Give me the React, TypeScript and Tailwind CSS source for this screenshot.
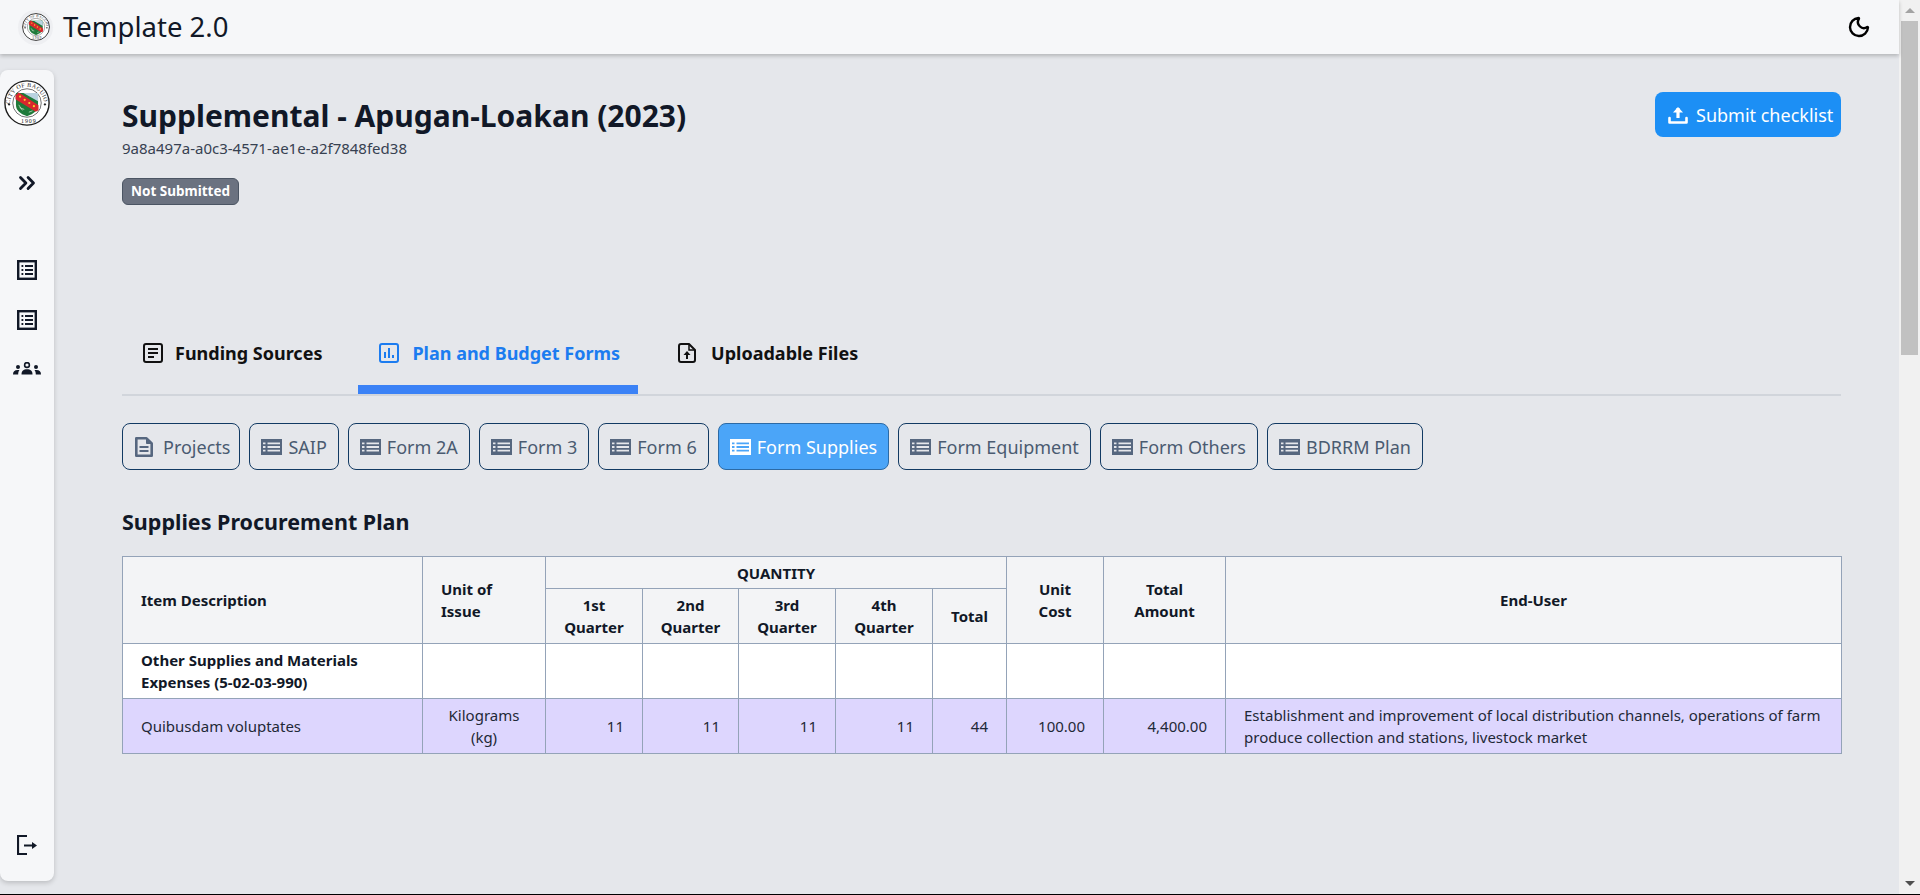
import { ChevronsRight, Moon } from 'lucide-react'

const subTabs = ['SAIP', 'Form 2A', 'Form 3', 'Form 6']
const subTabsAfter = ['Form Equipment', 'Form Others', 'BDRRM Plan']

function Seal({ className }: { className: string }) {
  return (
    <svg viewBox="0 0 100 100" className={className}>
      <defs>
        <path id="sealTop" d="M13 52a37 37 0 0 1 74 0" />
      </defs>
      <circle cx="50" cy="50" r="48" fill="#fff" stroke="#1c1c1c" strokeWidth="3" />
      <circle cx="50" cy="50" r="31" fill="#fff" stroke="#333" strokeWidth="1.5" />
      <text fontFamily="'Liberation Serif', serif" fontSize="13" fill="#222">
        <textPath href="#sealTop" textLength="112">CITY OF BAGUIO</textPath>
      </text>
      <text fontFamily="'Liberation Serif', serif" fontSize="13" fill="#222" x="37" y="94" letterSpacing="2">1909</text>
      <path d="M11 50l3 3-3 3-3-3z" fill="#222" />
      <path d="M89 50l3 3-3 3-3-3z" fill="#222" />
      <path d="M26 28h48v26c0 14-11 20-24 25-13-5-24-11-24-25z" fill="#1f7a3a" />
      <path d="M42 28h32v18z" fill="#b9d3e0" />
      <path d="M25 33l7-6 43 28v11l-6 3-44-27z" fill="#d8272d" />
      <circle cx="35" cy="36" r="2.4" fill="#f6d32d" />
      <circle cx="45" cy="43" r="2.4" fill="#f6d32d" />
      <circle cx="55" cy="50" r="2.4" fill="#f6d32d" />
      <circle cx="65" cy="57" r="2.4" fill="#f6d32d" />
      <path d="M34 60l10 4M32 54l8 12M54 70l8-3" stroke="#dbe9d5" strokeWidth="1.5" />
    </svg>
  )
}

function BoxList({ className }: { className: string }) {
  return (
    <svg viewBox="0 0 20 20" fill="none" stroke="currentColor" className={className}>
      <rect x="1.200" y="1.200" width="17.600" height="17.600" strokeWidth="2.400" />
      <path d="M8 6h8M8 10h8M8 14h8M4.500 6h1.800M4.500 10h1.800M4.500 14h1.800" strokeWidth="2" />
    </svg>
  )
}

function ThList({ className }: { className: string }) {
  return (
    <svg viewBox="0 0 21 16" fill="currentColor" className={className}>
      <path
        fillRule="evenodd"
        d="M0 0h21v16H0zM2 3.400v1.800h2.500V3.400zM6.500 3.400v1.800H19V3.400zM2 7.100v1.800h2.500V7.100zM6.500 7.100v1.800H19V7.100zM2 10.800v1.800h2.500v-1.800zM6.500 10.800v1.800H19v-1.800z"
      />
    </svg>
  )
}

function SubTab({ label, active }: { label: string; active?: boolean }) {
  return (
    <button
      className={
        active
          ? 'flex h-[47px] items-center gap-[6px] rounded-lg border border-[#2c6aa5] bg-[#4ba5f8] px-[11px] text-lg text-white'
          : 'flex h-[47px] items-center gap-[6px] rounded-lg border border-[#123a63] px-[11px] text-lg text-[#4a5b71]'
      }
    >
      <ThList className={active ? 'h-4 w-[21px] text-white' : 'h-4 w-[21px] text-[#56677f]'} />
      {label}
    </button>
  )
}

const thClass = 'border border-[#94a3b8] bg-[#f3f4f6] font-bold text-[#111827]'
const tdClass = 'border border-[#94a3b8] px-[18px] py-[5px]'

export default function App() {
  return (
    <div className="flex h-[895px] flex-col overflow-hidden bg-[#e5e7eb] font-['Noto_Sans',sans-serif] text-[#111827]">
      <div className="flex min-h-0 flex-1">
        <div className="flex min-w-0 flex-1 flex-col">
          <nav className="relative z-10 flex h-[54px] shrink-0 items-center justify-between bg-[#f6f7f9] pl-[18px] pr-[28px] shadow-[0_2px_4px_rgba(0,0,0,0.22)]">
            <div className="flex items-center gap-[10px]">
              <div className="flex h-[35px] w-[35px] items-center justify-center rounded-full bg-[#eeeff2]">
                <Seal className="h-[28px] w-[28px]" />
              </div>
              <span className="text-[27.5px] leading-none">Template 2.0</span>
            </div>
            <Moon size={24} strokeWidth={2.400} className="text-black" />
          </nav>

          <div className="flex min-h-0 flex-1">
            <aside className="mt-4 flex h-[811px] w-[54px] shrink-0 flex-col items-center rounded-lg bg-[#f6f7f9] pt-[10px] shadow-[0_2px_5px_rgba(0,0,0,0.18)]">
              <Seal className="h-[46px] w-[46px]" />
              <ChevronsRight size={26} strokeWidth={2.600} className="mt-[44px]" />
              <BoxList className="mt-[64px] h-5 w-5" />
              <BoxList className="mt-[30px] h-5 w-5" />
              <svg viewBox="0 0 28 13" fill="currentColor" className="mt-[32px] h-[13px] w-[28px]">
                <circle cx="14" cy="3" r="2.400" fill="none" stroke="currentColor" strokeWidth="1.600" />
                <path d="M8.500 12.500c0-3.600 2-5.200 5.500-5.200s5.500 1.600 5.500 5.200z" />
                <circle cx="5" cy="5" r="2" />
                <circle cx="23" cy="5" r="2" />
                <path d="M0 12.500c0-2.800 1.500-4.500 4.500-4.500h2c-1 1.200-1.300 2.700-1.300 4.500zM28 12.500c0-2.800-1.500-4.500-4.500-4.500h-2c1 1.200 1.300 2.700 1.300 4.500z" />
              </svg>
              <svg viewBox="0 0 20 20" fill="none" stroke="currentColor" className="mt-auto mb-[26px] h-5 w-5">
                <path d="M10 1H1v18h9" strokeWidth="2.200" />
                <path d="M7 10.500h10" strokeWidth="2" />
                <path d="M15 7l5 3.500-5 3.500z" fill="currentColor" stroke="none" />
              </svg>
            </aside>

            <main className="min-w-0 flex-1 pl-[68px] pr-[58px] pt-[38px]">
              <div className="flex items-start justify-between">
                <div>
                  <h1 className="mt-[6px] text-[30px] font-bold leading-9">Supplemental - Apugan-Loakan (2023)</h1>
                  <p className="mt-[4px] text-[15px] leading-5 text-[#374151]">9a8a497a-a0c3-4571-ae1e-a2f7848fed38</p>
                  <span className="mt-[20px] flex h-[27px] w-[117px] items-center justify-center rounded-md border border-[#4b5563] bg-[#6b7280] text-[13.500px] font-bold text-white">
                    Not Submitted
                  </span>
                </div>
                <button className="flex h-[45px] w-[186px] items-center gap-[8px] rounded-lg bg-[#1c8ff5] pl-[13px] text-lg text-white">
                  <svg viewBox="0 0 20 20" fill="none" stroke="currentColor" className="h-5 w-5">
                    <path d="M1.500 13v4.500h17V13" strokeWidth="2.600" strokeLinecap="round" strokeLinejoin="round" />
                    <path d="M10 13V3" strokeWidth="3.200" />
                    <path d="M5 7.500L10 2l5 5.500z" fill="currentColor" stroke="none" />
                  </svg>
                  Submit checklist
                </button>
              </div>

              <div className="mt-[105px] box-content flex h-[84px] gap-[15px] border-b-2 border-[#d1d5db]">
                <div className="flex items-center gap-[12px] px-[21px] pt-[2px] text-lg font-bold text-[#111]">
                  <svg viewBox="0 0 20 20" fill="none" stroke="currentColor" className="h-5 w-5">
                    <rect x="1" y="1" width="18" height="18" rx="2" strokeWidth="2" />
                    <path d="M5 6h10M5 10h10M5 14h6" strokeWidth="1.800" />
                  </svg>
                  Funding Sources
                </div>
                <div className="flex items-center gap-[13px] border-b-[9px] border-[#3b82f6] pl-[21px] pr-[18px] pt-[11px] text-lg font-bold text-[#1c7cf0]">
                  <svg viewBox="0 0 20 20" fill="none" stroke="currentColor" className="h-5 w-5">
                    <rect x="1" y="1" width="18" height="18" rx="2" strokeWidth="2" />
                    <path d="M6 9v6M10 5v10M14 12v3" strokeWidth="2" />
                  </svg>
                  Plan and Budget Forms
                </div>
                <div className="flex items-center gap-[15px] pl-[25px] pr-[21px] pt-[2px] text-lg font-bold text-[#111]">
                  <svg viewBox="0 0 18 20" fill="none" stroke="currentColor" className="h-5 w-[18px]">
                    <path d="M11 1H3a2 2 0 0 0-2 2v14a2 2 0 0 0 2 2h12a2 2 0 0 0 2-2V7z" strokeWidth="2" strokeLinejoin="round" />
                    <path d="M11 1v6h6" strokeWidth="1.500" />
                    <path d="M9 16v-5" strokeWidth="2" />
                    <path d="M5.500 12L9 8l3.500 4z" fill="currentColor" stroke="none" />
                  </svg>
                  Uploadable Files
                </div>
              </div>

              <div className="mt-[27px] flex gap-[9px]">
                <button className="flex h-[47px] items-center gap-[9px] rounded-lg border border-[#123a63] pl-[11px] pr-[9px] text-lg text-[#4a5b71]">
                  <svg viewBox="0 0 20 20" fill="none" stroke="#56677f" className="h-5 w-5">
                    <path d="M12.500 1.300H2.300v17.400h15.400V6.500z" strokeWidth="2.600" strokeLinejoin="round" />
                    <path d="M12.500 1.500V6.500h5z" fill="#56677f" strokeWidth="1" />
                    <path d="M5.500 10h9M5.500 14h9" strokeWidth="2.200" />
                  </svg>
                  Projects
                </button>
                {subTabs.map((label) => (
                  <SubTab key={label} label={label} />
                ))}
                <SubTab label="Form Supplies" active />
                {subTabsAfter.map((label) => (
                  <SubTab key={label} label={label} />
                ))}
              </div>

              <h2 className="mt-[38px] text-[21.5px] font-bold leading-7">Supplies Procurement Plan</h2>

              <table className="mt-[20px] w-full table-fixed border-collapse text-[15px] leading-[22px] text-[#1f2937]">
                <colgroup>
                  <col className="w-[300px]" />
                  <col className="w-[123px]" />
                  <col className="w-[97px]" />
                  <col className="w-[96px]" />
                  <col className="w-[97px]" />
                  <col className="w-[97px]" />
                  <col className="w-[74px]" />
                  <col className="w-[97px]" />
                  <col className="w-[122px]" />
                  <col className="w-[616px]" />
                </colgroup>
                <thead>
                  <tr className="h-[32px]">
                    <th rowSpan={2} className={`${thClass} px-[18px] text-left`}>Item Description</th>
                    <th rowSpan={2} className={`${thClass} px-[18px] text-left`}>Unit of Issue</th>
                    <th colSpan={5} className={`${thClass} text-center`}>QUANTITY</th>
                    <th rowSpan={2} className={`${thClass} px-[18px] text-center`}>Unit Cost</th>
                    <th rowSpan={2} className={`${thClass} px-[18px] text-center`}>Total Amount</th>
                    <th rowSpan={2} className={`${thClass} text-center`}>End-User</th>
                  </tr>
                  <tr className="h-[55px]">
                    <th className={`${thClass} px-[14px] text-center`}>1st Quarter</th>
                    <th className={`${thClass} px-[14px] text-center`}>2nd Quarter</th>
                    <th className={`${thClass} px-[14px] text-center`}>3rd Quarter</th>
                    <th className={`${thClass} px-[14px] text-center`}>4th Quarter</th>
                    <th className={`${thClass} text-center`}>Total</th>
                  </tr>
                </thead>
                <tbody>
                  <tr className="h-[55px] bg-white">
                    <td className={`${tdClass} font-bold text-[#111827]`}>Other Supplies and Materials Expenses (5-02-03-990)</td>
                    <td className={tdClass}></td>
                    <td className={tdClass}></td>
                    <td className={tdClass}></td>
                    <td className={tdClass}></td>
                    <td className={tdClass}></td>
                    <td className={tdClass}></td>
                    <td className={tdClass}></td>
                    <td className={tdClass}></td>
                    <td className={tdClass}></td>
                  </tr>
                  <tr className="h-[55px] bg-[#ddd6fe]">
                    <td className={tdClass}>Quibusdam voluptates</td>
                    <td className={`${tdClass} text-center`}>Kilograms (kg)</td>
                    <td className={`${tdClass} text-right`}>11</td>
                    <td className={`${tdClass} text-right`}>11</td>
                    <td className={`${tdClass} text-right`}>11</td>
                    <td className={`${tdClass} text-right`}>11</td>
                    <td className={`${tdClass} text-right`}>44</td>
                    <td className={`${tdClass} text-right`}>100.00</td>
                    <td className={`${tdClass} text-right`}>4,400.00</td>
                    <td className={tdClass}>Establishment and improvement of local distribution channels, operations of farm produce collection and stations, livestock market</td>
                  </tr>
                </tbody>
              </table>
            </main>
          </div>
        </div>

        <div className="flex w-[21px] shrink-0 flex-col items-center bg-[#f1f1f1]">
          <div className="flex h-[21px] items-center justify-center">
            <div className="h-0 w-0 border-x-[5px] border-b-[5px] border-x-transparent border-b-[#a3a3a3]" />
          </div>
          <div className="h-[334px] w-[17px] bg-[#c1c1c1]" />
          <div className="mt-auto flex h-[21px] items-center justify-center">
            <div className="h-0 w-0 border-x-[5px] border-t-[5px] border-x-transparent border-t-[#505050]" />
          </div>
        </div>
      </div>
      <div className="h-px shrink-0 bg-black" />
    </div>
  )
}
